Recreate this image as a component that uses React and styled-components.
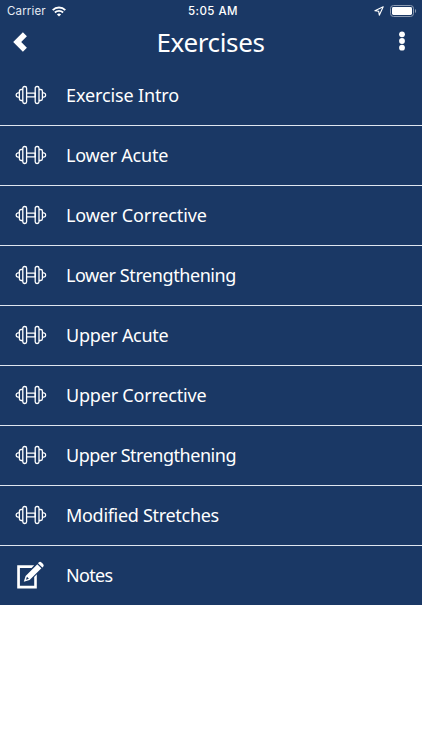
import React from 'react';
import styled, { createGlobalStyle } from 'styled-components';

const Global = createGlobalStyle`
  * { box-sizing: border-box; }
  body { margin: 0; background: #fff; }
`;

const Screen = styled.main`
  width: 422px;
  height: 750px;
  overflow: hidden;
  background: #fff;
  color: #fff;
  font-family: 'Noto Sans', 'Open Sans', sans-serif;
`;

const Header = styled.header`
  height: 66px;
  background: #1a3865;
`;

const StatusBar = styled.div`
  height: 22px;
  padding: 0 5px 0 7px;
  display: grid;
  grid-template-columns: 1fr auto 1fr;
  align-items: center;
  font-family: Inter, 'Liberation Sans', sans-serif;
  font-size: 11.5px;
  line-height: 22px;
`;

const StatusGroup = styled.div`
  display: flex;
  align-items: center;
  gap: ${(p) => p.$gap}px;
  justify-content: ${(p) => (p.$end ? 'flex-end' : 'flex-start')};
`;

const Carrier = styled.span`
  letter-spacing: 0.15px;
  color: #e6ebf3;
`;

const Clock = styled.span`
  padding-left: 2px;
  font-weight: 500;
  letter-spacing: 0.45px;
`;

const NavBar = styled.div`
  height: 41px;
  padding: 0 8px 0 12px;
  display: grid;
  grid-template-columns: 22px 1fr 24px;
  align-items: center;
`;

const Title = styled.h1`
  margin: 0;
  padding: 0 3px 2px 0;
  text-align: center;
  font-size: 26px;
  font-weight: 400;
  line-height: 38px;
  letter-spacing: -0.35px;
`;

const NavButton = styled.button`
  width: 24px;
  height: 34px;
  padding: ${(p) => (p.$end ? '0 0 3px' : '0 0 1px')};
  border: 0;
  background: none;
  color: inherit;
  display: flex;
  align-items: center;
  justify-content: ${(p) => (p.$end ? 'center' : 'flex-start')};
`;

const List = styled.ul`
  margin: 0;
  padding: 0;
  list-style: none;
`;

const Row = styled.li`
  height: 60px;
  padding-bottom: 1px;
  display: grid;
  grid-template-columns: 66px 1fr;
  align-items: center;
  background: #1a3865;
  border-bottom: 1px solid #dfe6f0;
  &:last-child {
    height: 59px;
    border-bottom: 0;
  }
`;

const IconCell = styled.span`
  display: flex;
  padding-left: 15px;
`;

const Label = styled.span`
  font-size: 18px;
  line-height: 24px;
  letter-spacing: ${(p) => p.$spacing || 0}px;
`;

const Wifi = () => (
  <svg width="14" height="11" viewBox="0 0 14 11" fill="none" stroke="#fff" strokeWidth="1.9">
    <path d="M.7 4.1a9 9 0 0 1 12.6 0M2.9 6.5a5.9 5.9 0 0 1 8.2 0" />
    <path d="M7 10.6 4.9 8.5a3 3 0 0 1 4.2 0z" fill="#fff" stroke="none" />
  </svg>
);

const Location = () => (
  <svg width="10" height="10" viewBox="0 0 10 10" fill="none" stroke="#fff" strokeWidth="1.1" strokeLinejoin="round">
    <path d="M9.2.8.9 4.7l3.8.6.6 3.9z" />
  </svg>
);

const Battery = () => (
  <svg width="27" height="12" viewBox="0 0 27 12">
    <rect x=".5" y=".5" width="23" height="11" rx="3" fill="none" stroke="#8c9bb2" />
    <rect x="2" y="2" width="20" height="8" rx="1.4" fill="#fff" />
    <path d="M25 4v4c1.5-.6 1.5-3.4 0-4z" fill="#8c9bb2" />
  </svg>
);

const Back = () => (
  <svg width="16" height="20" viewBox="0 0 16 20" fill="#fff">
    <path d="M10.9.3 14.9 4.2 9.2 10l5.7 5.8-4 3.9L1.2 10z" />
  </svg>
);

const More = () => (
  <svg width="6" height="20" viewBox="0 0 6 20" fill="#fff">
    <circle cx="3" cy="3.3" r="2.9" />
    <circle cx="3" cy="10" r="2.9" />
    <circle cx="3" cy="16.7" r="2.9" />
  </svg>
);

const Dumbbell = () => (
  <svg width="32" height="20" viewBox="0 0 32 20" fill="none" stroke="#fff" strokeWidth="1.3" strokeLinejoin="round">
    <rect x="7.8" y="1.5" width="3.8" height="17" rx="1.8" />
    <rect x="20.2" y="1.5" width="3.8" height="17" rx="1.8" />
    <path d="M11.6 8.2h8.6v3.6h-8.6M7.8 4.5H6.1Q4.4 4.5 4.4 6.2v7.6q0 1.7 1.7 1.7h1.7M24 4.5h1.7q1.7 0 1.7 1.7v7.6q0 1.7-1.7 1.7H24M4.4 7.8H3Q1.1 8.1 1.1 10T3 12.2h1.4M27.4 7.8h1.4q1.9.3 1.9 2.2t-1.9 2.2h-1.4" />
  </svg>
);

const Notes = () => (
  <svg width="30" height="28" viewBox="0 0 30 28" fill="#fff">
    <path d="M2.2 4.3h17l-2.6 2.6H4.9v17.8h14.3v-8.8l2.6-2.7v14.2H2.2z" />
    <path d="m22.4 3.2 4 4L14.6 19 8.8 20.8l1.8-5.8zM12 15.8l-1.1 3 3-1.1z" fillRule="evenodd" />
    <path d="M23.6 1.5q1.5-1.3 2.9 0l1.6 1.6q1.3 1.5 0 2.9l-.8.6-4.3-4.3z" />
    <path d="m22.4 2.6 4.4 4.4" stroke="#1a3865" strokeWidth=".7" />
  </svg>
);

const items = [
  { label: 'Exercise Intro', spacing: -0.13 },
  { label: 'Lower Acute', spacing: -0.18 },
  { label: 'Lower Corrective', spacing: -0.1 },
  { label: 'Lower Strengthening', spacing: -0.42 },
  { label: 'Upper Acute', spacing: -0.28 },
  { label: 'Upper Corrective', spacing: -0.2 },
  { label: 'Upper Strengthening', spacing: -0.48 },
  { label: 'Modified Stretches', spacing: -0.3 },
  { label: 'Notes', spacing: -0.7, icon: Notes },
];

export default function App() {
  return (
    <Screen>
      <Global />
      <Header>
        <StatusBar>
          <StatusGroup $gap={6}><Carrier>Carrier</Carrier><Wifi /></StatusGroup>
          <Clock>5:05 AM</Clock>
          <StatusGroup $gap={6} $end><Location /><Battery /></StatusGroup>
        </StatusBar>
        <NavBar>
          <NavButton aria-label="Back"><Back /></NavButton>
          <Title>Exercises</Title>
          <NavButton $end aria-label="More"><More /></NavButton>
        </NavBar>
      </Header>
      <List>
        {items.map(({ label, spacing, icon: Icon = Dumbbell }) => (
          <Row key={label}>
            <IconCell><Icon /></IconCell>
            <Label $spacing={spacing}>{label}</Label>
          </Row>
        ))}
      </List>
    </Screen>
  );
}
